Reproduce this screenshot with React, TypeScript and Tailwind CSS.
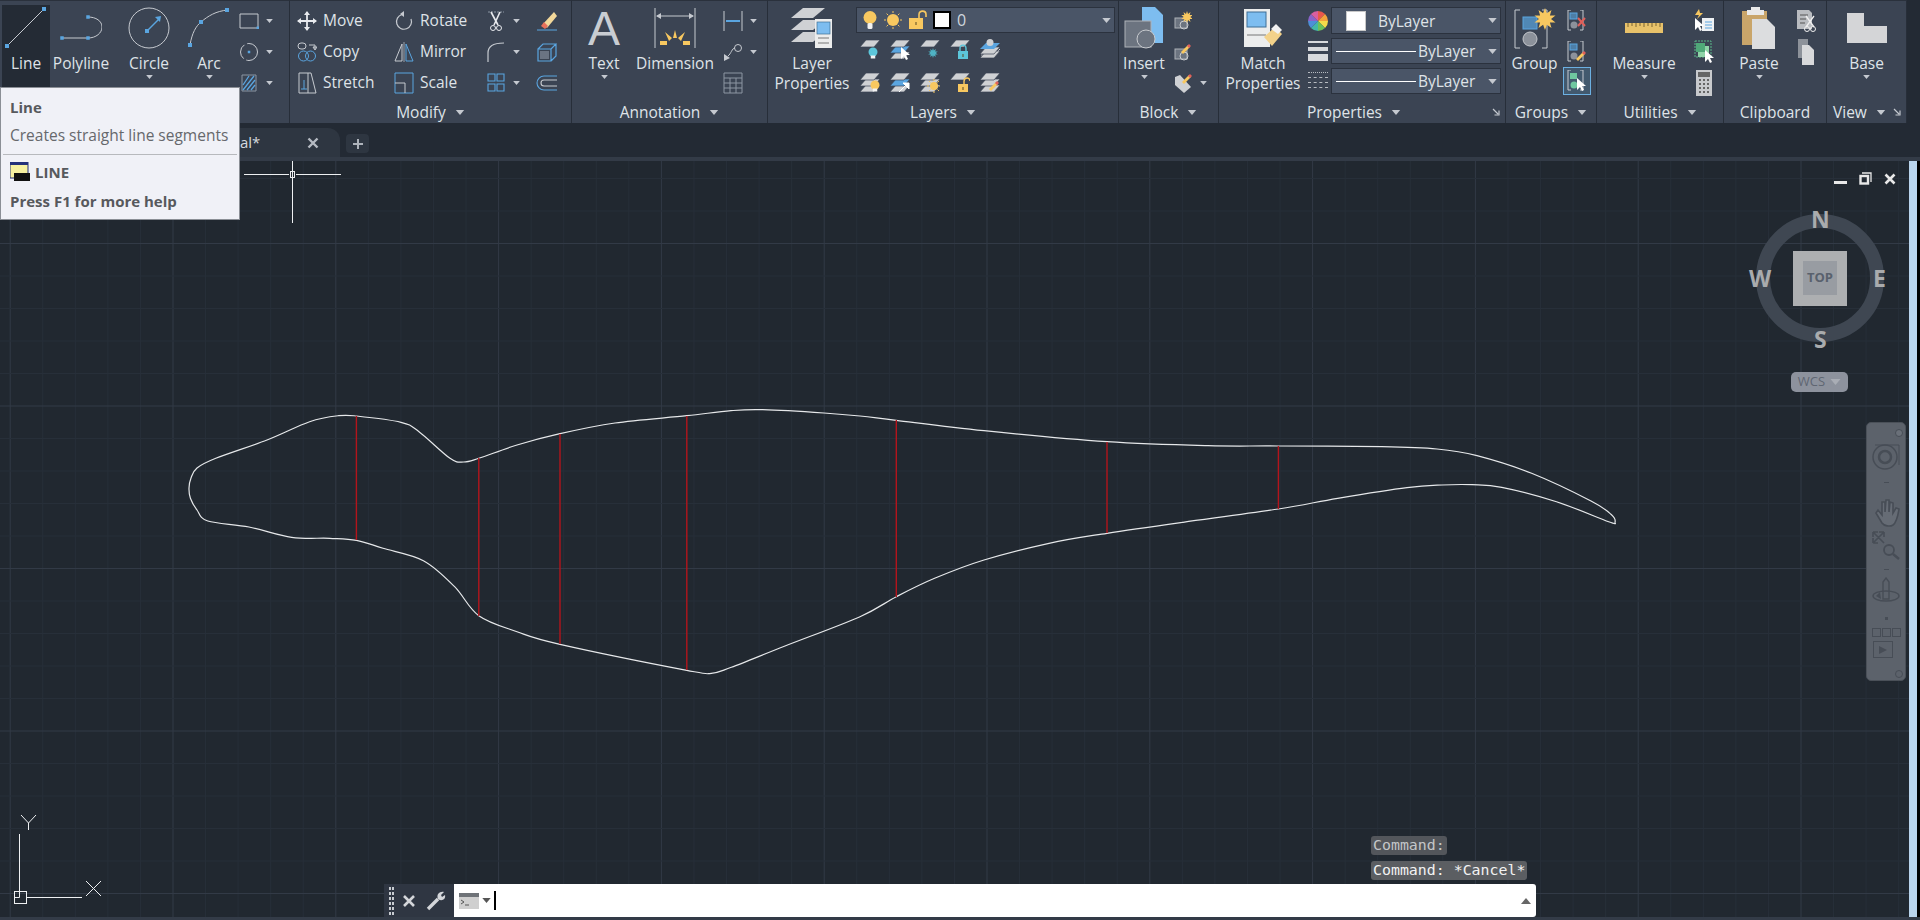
import { ReactNode } from "react";

const blue = "#5aa5e0";
const gray = "#c6cad0";
const sheet = "#cfd1d4";
const gold = "#f8c860";

function I({ w = 20, h = 20, children }: { w?: number; h?: number; children: ReactNode }) {
  return (
    <svg width={w} height={h} viewBox={`0 0 ${w} ${h}`} fill="none" className="relative block shrink-0">
      {children}
    </svg>
  );
}

function Caret({ w = 7, h = 4, c = "#c5c9d0" }: { w?: number; h?: number; c?: string }) {
  return (
    <svg width={w} height={h} viewBox="0 0 10 6" className="block shrink-0">
      <path d="M0 0H10L5 6Z" fill={c} />
    </svg>
  );
}

const Dot = ({ x, y, s = 4, c = blue }: { x: number; y: number; s?: number; c?: string }) => (
  <rect x={x - s / 2} y={y - s / 2} width={s} height={s} fill={c} />
);

// one layer sheet as a flat parallelogram
const Sheet = ({ x, y, c = sheet }: { x: number; y: number; c?: string }) => (
  <path d={`M${x + 6} ${y}H${x + 20}L${x + 14} ${y + 7}H${x}Z`} fill={c} stroke="#3b4453" strokeWidth="0.7" />
);

const Stack = ({ mid = sheet }: { mid?: string }) => (
  <>
    <Sheet x={0} y={13} />
    <Sheet x={0} y={7} c={mid} />
    <Sheet x={0} y={1} />
  </>
);

const Bulb = ({ x, y, c = gold, r = 4.5 }: { x: number; y: number; c?: string; r?: number }) => (
  <>
    <circle cx={x} cy={y} r={r} fill={c} />
    <rect x={x - r / 2} y={y + r - 1} width={r} height={3} fill="#f3f3f3" />
  </>
);

const Padlock = ({ x, y, c = gold, open = false }: { x: number; y: number; c?: string; open?: boolean }) => (
  <>
    <path d={open ? `M${x + 6} ${y + 4}V${y + 1.5}C${x + 6} ${y - 3} ${x + 12} ${y - 3} ${x + 12} ${y + 1}` : `M${x + 2} ${y + 4}V${y + 1.5}C${x + 2} ${y - 3} ${x + 8} ${y - 3} ${x + 8} ${y + 1.5}V${y + 4}`} stroke={c} strokeWidth="1.4" />
    <rect x={x} y={y + 4} width={10} height={8} fill={c} />
    <rect x={x + 4.5} y={y + 7} width={1} height={3} fill="#5d4a20" />
  </>
);

const Pencil = ({ x, y }: { x: number; y: number }) => (
  <>
    <path d={`M${x} ${y + 9}L${x + 7} ${y + 2}L${x + 9} ${y + 4}L${x + 2} ${y + 11}Z`} fill={gold} />
    <path d={`M${x + 6} ${y + 3}L${x + 8} ${y + 1}L${x + 10} ${y + 3}L${x + 8} ${y + 5}Z`} fill="#e0605a" />
  </>
);

const Star = ({ x, y, r = 8, c = gold }: { x: number; y: number; r?: number; c?: string }) => {
  const pts = Array.from({ length: 20 }, (_, i) => {
    const a = (i * Math.PI) / 10;
    const d = i % 2 ? r * 0.55 : r;
    return `${(x + d * Math.sin(a)).toFixed(1)},${(y - d * Math.cos(a)).toFixed(1)}`;
  });
  return <polygon points={pts.join(" ")} fill={c} />;
};

// sun: disc with short rays
const Sun = ({ x, y, r = 6, c = gold }: { x: number; y: number; r?: number; c?: string }) => (
  <>
    <circle cx={x} cy={y} r={r} fill={c} />
    {Array.from({ length: 8 }, (_, i) => {
      const a = (i * Math.PI) / 4;
      const p = (d: number) => `${(x + d * Math.sin(a)).toFixed(1)} ${(y - d * Math.cos(a)).toFixed(1)}`;
      return <path key={i} d={`M${p(r + 1)}L${p(r + 3)}`} stroke={c} />;
    })}
  </>
);

const Arrow = ({ x, y, c = "#fff" }: { x: number; y: number; c?: string }) => (
  <path d={`M${x} ${y}V${y + 12}L${x + 3} ${y + 9}L${x + 5} ${y + 13}L${x + 7} ${y + 12}L${x + 5} ${y + 8}H${x + 9}Z`} fill={c} />
);

const Brackets = ({ h = 20, w = 16 }: { h?: number; w?: number }) => (
  <path d={`M4 0H1V${h}H4M${w - 3} 0H${w}V${h}H${w - 3}`} stroke={gray} strokeWidth="1" />
);

function Device({ x, y }: { x: number; y: number }) {
  return (
    <>
      <rect x={x} y={y} width={17} height={29} fill="#eceded" />
      <rect x={x + 2} y={y + 3} width={13} height={12} fill="#7dbdf0" stroke="#3e6f96" strokeWidth="0.7" />
      <path d={`M${x + 3} ${y + 19}H${x + 14}M${x + 3} ${y + 24}H${x + 14}`} stroke="#777" />
    </>
  );
}

function BigTool({ w, label, icon, caret, active }: { w: number; label: ReactNode; icon: ReactNode; caret?: boolean; active?: boolean }) {
  return (
    <div style={{ width: w }} className="relative flex shrink-0 flex-col items-center">
      {active && <div className="absolute inset-x-0 top-[5px] h-[82px] bg-[#242b35]" />}
      <div className="relative flex h-[53px] items-center justify-center pt-[3px]">{icon}</div>
      <div className="relative text-center text-[15.5px] leading-[20px] text-[#dfe3e8]">{label}</div>
      {caret && <div className="mt-[2px]"><Caret /></div>}
    </div>
  );
}

function Rows({ children, className = "" }: { children: ReactNode; className?: string }) {
  return <div className={`flex shrink-0 flex-col pt-[5px] ${className}`}>{children}</div>;
}

function Row({ icon, caret, className = "" }: { icon: ReactNode; caret?: boolean; className?: string }) {
  return (
    <div className={`flex h-[31px] items-center ${className}`}>
      <div className="flex w-5 justify-center">{icon}</div>
      {caret && <div className="ml-[7px]"><Caret /></div>}
    </div>
  );
}

function TextRow({ icon, label }: { icon: ReactNode; label: string }) {
  return (
    <div className="flex h-[31px] items-center gap-[6px]">
      <div className="flex w-5 justify-center">{icon}</div>
      <span className="text-[15.5px] text-[#dfe3e8]">{label}</span>
    </div>
  );
}

function Launcher() {
  return (
    <svg width="8" height="8" viewBox="0 0 8 8" className="block">
      <path d="M1 1L6 6M7 2.5V7H2.5" stroke="#c5c9d0" strokeWidth="1.2" fill="none" />
    </svg>
  );
}

function Panel({ w, title, caret = true, launcher, children, titleClass = "justify-center" }: { w: number; title: string; caret?: boolean; launcher?: boolean; children: ReactNode; titleClass?: string }) {
  return (
    <div style={{ width: w }} className="flex shrink-0 flex-col border-r border-t border-r-[#272e39] border-t-[#2a313c] bg-[#3b4453]">
      <div className="-mt-px flex h-[99px]">{children}</div>
      <div className={`relative flex h-[24px] items-center gap-[9px] pt-[3px] text-[15.5px] text-[#dfe3e8] ${titleClass}`}>
        <span>{title}</span>
        {caret && <Caret w={10} h={5} />}
        {launcher && <div className="absolute right-[5px] top-[9px]"><Launcher /></div>}
      </div>
    </div>
  );
}

function Combo({ children, className = "h-[26px]" }: { children: ReactNode; className?: string }) {
  return (
    <div className={`flex items-center border border-[#2b323e] bg-[#4a5567] text-[15.5px] text-[#dfe3e8] ${className}`}>
      {children}
      <div className="ml-auto mr-[3px]"><Caret w={9} h={5} /></div>
    </div>
  );
}

function DrawPanel() {
  return (
    <Panel w={290} title="Draw">
      <div className="ml-[2px] flex">
        <BigTool w={48} active label="Line" icon={
          <I w={42} h={42}>
            <path d="M2 39L39 2" stroke={gray} />
            <Dot x={2} y={39} s={4} /><Dot x={39} y={2} s={4} />
          </I>
        } />
        <BigTool w={62} label="Polyline" icon={
          <I w={42} h={28}>
            <path d="M2 24H28C36 24 42 19 42 13C42 7 36 3 28 3" stroke={gray} />
            <Dot x={2} y={24} s={3.5} /><Dot x={28} y={24} s={3.5} /><Dot x={28} y={3} s={3.5} />
          </I>
        } />
        <BigTool w={74} label="Circle" caret icon={
          <I w={42} h={42}>
            <circle cx="21" cy="21" r="20" stroke={gray} />
            <path d="M19 24L31 12" stroke={blue} strokeWidth="1.5" />
            <Dot x={19} y={24} s={4} /><path d="M33 9L32 15L27 10Z" fill={blue} />
          </I>
        } />
        <BigTool w={46} label="Arc" caret icon={
          <I w={42} h={40}>
            <path d="M2 37C4 25 8 18 13 14C20 8 28 3 40 2" stroke={gray} />
            <Dot x={2} y={37} s={4} /><Dot x={13} y={14} s={4} /><Dot x={39} y={2} s={4} />
          </I>
        } />
      </div>
      <Rows className="ml-[7px]">
        <Row caret icon={<I w={20} h={16}><path d="M1 1H19V15H1Z" stroke={gray} /><Dot x={19} y={15} s={3} /></I>} />
        <Row caret icon={<I w={20} h={18}><circle cx="10" cy="9" r="8.5" stroke={gray} strokeDasharray="16 3 16 3" /><Dot x={10} y={9} s={2.5} /></I>} />
        <Row caret icon={
          <I w={20} h={20}>
            <path d="M3 2H17V18H3Z" stroke="#8b95a3" />
            <path d="M4 12L10 3M4 17L15 3M8 17L16 7M12 17L16 12" stroke={blue} strokeWidth="1.3" />
          </I>
        } />
      </Rows>
    </Panel>
  );
}

function ModifyPanel() {
  return (
    <Panel w={282} title="Modify">
      <div className="ml-[7px] grid grid-cols-[97px_92px_51px_40px] grid-rows-[31px_31px_31px] pt-[5px]">
        <TextRow label="Move" icon={
          <I>
            <path d="M10 1V19M1 10H19" stroke="#e8eaee" strokeWidth="1.8" />
            <path d="M10 0L13 4H7ZM10 20L13 16H7ZM0 10L4 7V13ZM20 10L16 7V13Z" fill="#e8eaee" />
          </I>
        } />
        <TextRow label="Rotate" icon={
          <I>
            <path d="M8 3.5A7.5 7.5 0 1 0 17 8" stroke={gray} strokeWidth="1.2" />
            <path d="M6 3L10 0V6Z" fill={gray} />
          </I>
        } />
        <Row caret icon={
          <I h={22}>
            <path d="M2 2H18" stroke="#8b95a3" strokeDasharray="2 1" />
            <path d="M5 2L12 15M14 2L8 15" stroke="#e8eaee" strokeWidth="1.6" />
            <circle cx="7" cy="18" r="2.5" stroke="#e8eaee" /><circle cx="13" cy="18" r="2.5" stroke="#e8eaee" />
          </I>
        } />
        <Row icon={
          <I w={22} h={22}>
            <path d="M7 14L18 2L21 6L11 18Z" fill="#f3d89a" /><path d="M5 16L8 12L12 16L9 19Z" fill="#e8705a" />
            <path d="M1 20H21" stroke={blue} />
          </I>
        } />
        <TextRow label="Copy" icon={
          <I>
            <rect x="1" y="1" width="8" height="6" rx="3" stroke={gray} /><path d="M12 3H18V7M18 8L16 5H20Z" stroke={gray} />
            <circle cx="6.5" cy="14" r="5" stroke={blue} /><circle cx="13.5" cy="14" r="5" stroke={blue} />
          </I>
        } />
        <TextRow label="Mirror" icon={
          <I h={20}>
            <path d="M8 2L1 19H8Z" stroke={gray} /><path d="M12 2L19 19H12Z" stroke={blue} /><path d="M10 0V20" stroke={gray} strokeWidth="0.7" />
          </I>
        } />
        <Row caret icon={<I><path d="M2 20V11C2 5 6 1 18 1" stroke={gray} strokeWidth="1.2" /></I>} />
        <Row icon={
          <I h={20}>
            <path d="M1 7H14V19H1ZM1 7L6 2H19L14 7M14 19L19 14V2" stroke={blue} strokeWidth="1.2" />
            <path d="M3 9H12V17H3Z" fill="#6b7483" />
          </I>
        } />
        <TextRow label="Stretch" icon={
          <I w={20} h={22}>
            <path d="M2 1H11V21H2ZM11 1H14L19 21H11" stroke={gray} strokeWidth="1" />
            <path d="M7 8V17M4 17H10" stroke={blue} />
          </I>
        } />
        <TextRow label="Scale" icon={
          <I h={22}>
            <path d="M1 1H19V21H1Z" stroke={blue} strokeWidth="1" /><path d="M1 11H11V21" stroke={gray} strokeWidth="1" />
          </I>
        } />
        <Row caret icon={
          <I w={18} h={20}>
            <path d="M1 1H8V8H1ZM10 1H17V8H10ZM1 11H8V18H1ZM10 11H17V18H10Z" stroke={blue} strokeWidth="1.1" />
          </I>
        } />
        <Row icon={
          <I w={22} h={16}>
            <path d="M21 1H8A7 7 0 0 0 8 15H21" stroke={blue} strokeWidth="1.1" />
            <path d="M21 5H8A3 3 0 0 0 8 11H21" stroke={gray} strokeWidth="1.1" />
          </I>
        } />
      </div>
    </Panel>
  );
}

function AnnotationPanel() {
  return (
    <Panel w={196} title="Annotation">
      <div className="flex pl-[2px]">
        <BigTool w={60} label="Text" caret icon={
          <span className="mt-[1px] block font-['Liberation_Sans',sans-serif] text-[48px] leading-[48px] text-[#c9cdd2]">A</span>
        } />
        <BigTool w={82} label="Dimension" icon={
          <I w={42} h={42}>
            <path d="M1 1V41M41 1V41" stroke={gray} />
            <path d="M3 9H39" stroke={gray} /><path d="M2 9L7 6V12ZM40 9L35 6V12Z" fill={gray} />
            <path d="M21 23L23 31H19ZM11 25L18 31L15 34ZM31 25L24 31L27 34Z" fill={gold} />
            <path d="M6 34H13V38H6ZM29 34H36V38H29Z" fill={gold} />
          </I>
        } />
        <Rows className="ml-[7px]">
          <Row caret icon={
            <I h={22}><path d="M1 1V21M19 1V21" stroke={gray} /><path d="M3 11H17" stroke={blue} strokeWidth="2" /></I>
          } />
          <Row caret icon={
            <I h={20}><circle cx="15" cy="6" r="3.5" stroke={gray} /><path d="M12 6C9 6 8 12 5 14" stroke={gray} /><path d="M1 19V12L7 16Z" fill={gray} /></I>
          } />
          <Row icon={
            <I w={20} h={22}><path d="M1 1H19V21H1ZM1 6H19M1 11H19M1 16H19M7 6V21M13 6V21" stroke="#8d96a3" /></I>
          } />
        </Rows>
      </div>
    </Panel>
  );
}

function LayersPanel() {
  return (
    <Panel w={351} title="Layers">
      <div className="flex w-[88px] shrink-0 flex-col items-center">
        <div className="flex h-[53px] items-center pt-[3px]">
          <I w={42} h={42}>
            <path d="M12 1H34L22 11H0Z" fill={sheet} /><path d="M12 13H34L22 23H0Z" fill={sheet} /><path d="M12 25H34L22 35H0Z" fill={sheet} />
            <Device x={24} y={12} />
          </I>
        </div>
        <div className="text-center text-[15.5px] leading-[20px] text-[#dfe3e8]">Layer<br />Properties</div>
      </div>
      <div className="flex flex-col pt-[7px]">
        <Combo className="h-[26px] w-[259px]">
          <div className="ml-[5px] flex items-center gap-[5px]">
            <I w={16} h={20}><circle cx="8" cy="7.5" r="6.5" fill={gold} /><rect x="5.5" y="13" width="5" height="6" rx="1.5" fill="#f2f2f2" /></I>
            <I w={20} h={20}><Sun x={10} y={10} /></I>
            <I w={20} h={20}>
              <rect x="1" y="8" width="14" height="11" fill={gold} />
              <path d="M11 8V4.5C11 0 18 0 18 4.5V7" stroke={gold} strokeWidth="1.6" />
              <rect x="7.5" y="12" width="1" height="3" fill="#5d4a20" />
            </I>
          </div>
          <div className="ml-[5px] h-[18px] w-[18px] border-2 border-black bg-white" />
          <span className="ml-[6px] text-[16px] text-[#cfd5dd]">0</span>
        </Combo>
        <div className="ml-[4px] mt-[6px] flex gap-[10px]">
          <I h={22}><Sheet x={0} y={1} /><Bulb x={13} y={13} c="#5cc6da" /></I>
          <I h={22}><Stack mid={blue} /><Arrow x={11} y={8} /></I>
          <I h={22}><Sheet x={0} y={1} /><Star x={13} y={14} r={5} c="#4fb3c4" /></I>
          <I h={22}><Sheet x={0} y={1} /><Padlock x={8} y={8} c="#5cc6da" /></I>
          <I h={22}><path d="M1 16H14L20 10" stroke={sheet} /><Sheet x={0} y={12} /><Sheet x={0} y={8} /><path d="M6 4H20L14 10H0Z" fill={blue} /><circle cx="10" cy="3.5" r="3.5" fill={sheet} /></I>
        </div>
        <div className="ml-[4px] mt-[11px] flex gap-[10px]">
          <I h={22}><Stack /><Bulb x={15} y={13} /></I>
          <I h={22}><Stack mid={blue} /><path d="M9 20L17 12M13 11H19V17Z" stroke="#fff" fill="#fff" /></I>
          <I h={22}><Stack /><Sun x={14} y={14} r={4} /></I>
          <I h={22}><Sheet x={0} y={1} /><Padlock x={8} y={8} open /></I>
          <I h={22}><Stack /><Pencil x={9} y={8} /></I>
        </div>
      </div>
    </Panel>
  );
}

function BlockPanel() {
  return (
    <Panel w={100} title="Block">
      <BigTool w={50} label="Insert" caret icon={
        <I w={40} h={42}>
          <path d="M18 0H31L39 8V36H18Z" fill="#7dbdf0" />
          <rect x="1" y="14" width="26" height="26" fill="#6c7480" stroke="#aeb2b8" />
          <circle cx="22" cy="32" r="9" fill="#6c7480" stroke="#c9ccd0" />
        </I>
      } />
      <Rows className="ml-[4px]">
        <Row icon={<I w={18} h={20}><rect x="1" y="7" width="12" height="10" fill="#6c7480" stroke="#aeb2b8" /><circle cx="10" cy="14" r="4" stroke="#c9ccd0" /><Star x={13} y={6} r={6} /></I>} />
        <Row icon={<I w={18} h={20}><rect x="1" y="7" width="12" height="10" fill="#6c7480" stroke="#aeb2b8" /><circle cx="10" cy="14" r="4" stroke="#c9ccd0" /><Pencil x={7} y={1} /></I>} />
        <Row caret icon={<I w={18} h={22}><path d="M1 5L6 3L17 15L10 21L1 13Z" fill={sheet} /><Pencil x={8} y={1} /></I>} />
      </Rows>
    </Panel>
  );
}

function PropertiesPanel() {
  const slices = ["#e9574c", "#f3a33c", "#f5dc4a", "#6cc15a", "#43b7a8", "#4c8fd8", "#8a63c9", "#d95fa0"];
  return (
    <Panel w={287} title="Properties" launcher titleClass="justify-center pr-[16px]">
      <BigTool w={88} label={<>Match<br />Properties</>} icon={
        <I w={40} h={42}>
          <rect x="1" y="2" width="26" height="38" fill="#eceded" />
          <rect x="4" y="5" width="19" height="15" fill="#7dbdf0" stroke="#3e6f96" />
          <path d="M4 28H23" stroke="#777" />
          <path d="M21 30L32 20L39 27L29 39Z" fill="#f3d28a" />
          <path d="M28 22L33 17L39 23L35 27Z" fill="#f2f2f2" />
        </I>
      } />
      <div className="ml-[1px] flex w-5 flex-col items-center pt-[11px]">
        <svg width="20" height="20" viewBox="-10 -10 20 20" className="block">
          {slices.map((c, i) => {
            const a = (i * Math.PI) / 4;
            const b = ((i + 1) * Math.PI) / 4;
            return <path key={c} d={`M0 0L${10 * Math.sin(a)} ${-10 * Math.cos(a)}A10 10 0 0 1 ${10 * Math.sin(b)} ${-10 * Math.cos(b)}Z`} fill={c} />;
          })}
        </svg>
        <div className="mt-[10px] flex h-[20px] w-5 flex-col justify-between">
          <div className="h-[2px] bg-[#d8dadd]" /><div className="h-[4px] bg-[#d8dadd]" /><div className="h-[7px] bg-[#d8dadd]" />
        </div>
        <div className="mt-[11px] flex h-[16px] w-5 flex-col justify-between">
          <div className="border-t border-dotted border-[#b8bcc2]" /><div className="border-t border-dashed border-[#b8bcc2]" /><div className="border-t border-dashed border-[#b8bcc2]" /><div className="border-t border-dashed border-[#b8bcc2]" />
        </div>
      </div>
      <div className="ml-[3px] flex w-[170px] flex-col gap-[4px] pt-[7px]">
        <Combo className="h-[27px]">
          <div className="ml-[14px] h-[20px] w-[20px] border border-[#c8c8c8] bg-white" />
          <span className="ml-[12px] pt-[2px]">ByLayer</span>
        </Combo>
        <Combo>
          <div className="ml-[4px] h-px w-[80px] bg-white" />
          <span className="ml-[2px] pt-[2px]">ByLayer</span>
        </Combo>
        <Combo>
          <div className="ml-[4px] h-px w-[80px] bg-white" />
          <span className="ml-[2px] pt-[2px]">ByLayer</span>
        </Combo>
      </div>
    </Panel>
  );
}

function GroupsPanel() {
  return (
    <Panel w={91} title="Groups">
      <BigTool w={57} label="Group" icon={
        <I w={42} h={42}>
          <path d="M6 3H1V41H6M28 3H33V41H28" stroke={gray} />
          <rect x="9" y="10" width="14" height="12" fill={blue} fillOpacity="0.7" stroke={blue} />
          <circle cx="16" cy="32" r="7" fill="#8c929b" stroke="#c4c7cc" />
          <Star x={31} y={12} r={11} />
        </I>
      } />
      <Rows className="w-[28px] items-center">
        <div className="flex h-[31px] items-center">
          <I h={22}><Brackets h={20} /><rect x="3" y="3" width="7" height="6" fill={blue} fillOpacity="0.6" stroke={blue} /><circle cx="7" cy="15" r="3.5" fill="#8c929b" /><path d="M11 8L18 16M18 8L11 16" stroke="#e0605a" strokeWidth="2" /></I>
        </div>
        <div className="flex h-[31px] items-center">
          <I h={22}><Brackets h={20} /><rect x="3" y="3" width="7" height="6" fill={blue} fillOpacity="0.6" stroke={blue} /><circle cx="7" cy="15" r="3.5" fill="#8c929b" /><Pencil x={9} y={9} /></I>
        </div>
        <div className="flex h-[28px] w-[28px] items-center justify-center border border-[#6cb0e2] bg-[#42596e]">
          <I h={22}><Brackets h={20} /><rect x="3" y="3" width="7" height="6" fill="#6fc7a0" /><circle cx="7" cy="15" r="3.5" fill="#6fc7a0" /><Arrow x={10} y={8} /></I>
        </div>
      </Rows>
    </Panel>
  );
}

function UtilitiesPanel() {
  return (
    <Panel w={127} title="Utilities">
      <BigTool w={94} label="Measure" caret icon={
        <I w={38} h={12}>
          <rect x="0" y="1" width="38" height="10" fill="#e8c26a" />
          <path d="M3 1V5M7 1V4M11 1V5M15 1V4M19 1V5M23 1V4M27 1V5M31 1V4M35 1V5" stroke="#7a6430" />
        </I>
      } />
      <Rows className="ml-[3px]">
        <Row icon={<I h={24}><path d="M5 0L1 6H5L3 10L9 4H6Z" fill={gold} /><rect x="8" y="9" width="12" height="13" fill="#eef1f4" /><path d="M11 13H18M11 16H18M11 19H18" stroke={blue} /><Arrow x={1} y={9} /></I>} />
        <Row icon={<I h={24}><rect x="1" y="1" width="16" height="16" stroke="#5ab88a" strokeDasharray="2 1" /><rect x="4" y="6" width="11" height="11" fill="#8fd3a8" /><rect x="2" y="3" width="9" height="9" fill="#4fa878" /><Arrow x={11} y={10} /></I>} />
        <Row icon={<I w={16} h={26}><rect x="0" y="0" width="16" height="26" fill="#c8cacd" /><rect x="2" y="2" width="12" height="5" fill="#666" /><path d="M3 10H13M3 14H13M3 18H13M3 22H13" stroke="#666" strokeWidth="2" strokeDasharray="2 2" /></I>} />
      </Rows>
    </Panel>
  );
}

function ClipboardPanel() {
  return (
    <Panel w={103} title="Clipboard" caret={false}>
      <BigTool w={70} label="Paste" caret icon={
        <I w={34} h={42}>
          <rect x="0" y="4" width="25" height="34" fill="#c9a56a" />
          <rect x="9" y="0" width="9" height="5" fill="#e9e9e9" /><rect x="5" y="3" width="17" height="5" fill="#e9e9e9" />
          <path d="M10 12H25L33 20V42H10Z" fill="#dcdddf" />
        </I>
      } />
      <Rows className="ml-[2px]">
        <Row icon={<I h={22}><path d="M1 0H13L16 3V19H1Z" fill="#b9bcc0" /><path d="M4 5H12M4 9H10M4 13H9" stroke="#555" /><path d="M10 6L18 17M18 6L10 17" stroke="#f0f0f0" strokeWidth="1.3" /><circle cx="11" cy="19" r="2.5" stroke="#f0f0f0" /><circle cx="17" cy="19" r="2.5" stroke="#f0f0f0" /></I>} />
        <Row icon={<I w={16} h={26}><path d="M0 0H10V19H0Z" fill="#8d929a" /><path d="M4 6H11L16 11V26H4Z" fill="#d8d9db" /></I>} />
      </Rows>
    </Panel>
  );
}

function ViewPanel() {
  return (
    <Panel w={80} title="View" launcher titleClass="pl-[6px]">
      <BigTool w={79} label="Base" caret icon={
        <I w={40} h={30}>
          <path d="M0 0H17V13H40V30H0Z" fill="#d4d5d7" />
        </I>
      } />
    </Panel>
  );
}

// outline of the blade section, page coordinates
const outline: [number, number][] = [
  [189, 488], [191, 478], [197, 468], [215.8, 458.3], [267, 440], [309.6, 421.7], [338.6, 415.7], [356.4, 416], [401, 422.3], [419, 431.7], [450, 458.3], [463.6, 462], [478.8, 458.3], [517, 445], [560, 433.7], [615, 423], [686.8, 415.7], [731, 410.7], [762.7, 409.7], [824, 413], [860, 416], [896.3, 420.3], [984, 430.7], [1107, 441.7], [1208, 445.7], [1278.4, 446], [1382, 446.7], [1437, 449], [1477, 455.7], [1531.6, 473.3], [1591, 501], [1611, 514.3], [1615, 522.3], [1608.7, 521.7], [1556.5, 501.7], [1501.8, 487.3], [1472, 484.7], [1442, 485], [1407, 487.7], [1337.6, 498.3], [1278.4, 509], [1183, 522.3], [1107, 533.3], [1049, 543.3], [984, 560], [934.6, 578.3], [896.3, 596.7], [860, 616.7], [785, 646], [731.4, 667.3], [711.3, 673.3], [686.8, 670.3], [560, 644.3], [517, 631.7], [478.8, 615.7], [454.6, 586.7], [423.4, 560.7], [383, 548.3], [356.4, 540.3], [329.6, 538.3], [291.7, 537.3], [249, 527], [207.8, 521], [197, 510], [190.4, 498.3],
];

function smoothPath(pts: [number, number][]) {
  const n = pts.length;
  let d = `M${pts[0][0]} ${pts[0][1]}`;
  for (let i = 0; i < n; i++) {
    const p0 = pts[(i - 1 + n) % n];
    const p1 = pts[i];
    const p2 = pts[(i + 1) % n];
    const p3 = pts[(i + 2) % n];
    const c1x = p1[0] + (p2[0] - p0[0]) / 6;
    const c1y = p1[1] + (p2[1] - p0[1]) / 6;
    const c2x = p2[0] - (p3[0] - p1[0]) / 6;
    const c2y = p2[1] - (p3[1] - p1[1]) / 6;
    d += `C${c1x.toFixed(1)} ${c1y.toFixed(1)} ${c2x.toFixed(1)} ${c2y.toFixed(1)} ${p2[0]} ${p2[1]}`;
  }
  return d + "Z";
}

const sections = [
  [356.4, 416, 540], [478.8, 458, 616], [560, 434, 644], [686.8, 416, 670], [896.3, 420, 597], [1107, 442, 533], [1278.4, 446, 509],
];

const gridX = Array.from({ length: 59 }, (_, i) => 10.2 + i * 32.56);
const gridY = Array.from({ length: 24 }, (_, i) => 178.5 + i * 32.5);

function Drawing() {
  return (
    <svg className="absolute inset-0 block h-full w-full" viewBox="0 161 1909 756" preserveAspectRatio="none" fill="none">
      {gridX.map((x, i) => (
        <path key={x} d={`M${x} 161V917`} stroke={i % 5 === 0 ? "#323a46" : "#272f39"} />
      ))}
      {gridY.map((y, i) => (
        <path key={y} d={`M0 ${y}H1909`} stroke={i % 5 === 2 ? "#323a46" : "#272f39"} />
      ))}
      <path d={smoothPath(outline)} stroke="#e6e8ea" strokeWidth="1.2" />
      {sections.map(([x, a, b]) => (
        <path key={x} d={`M${x} ${a}V${b}`} stroke="#b3141c" strokeWidth="1.4" />
      ))}
      {/* crosshair */}
      <path d="M292.5 161V223M244 174.5H289M296 174.5H341" stroke="#eef0f2" />
      <rect x="290.5" y="171.5" width="4" height="6" stroke="#eef0f2" />
      {/* ucs */}
      <path d="M19.5 834V891M26 897.5H82" stroke="#eef0f2" />
      <rect x="14.5" y="891.5" width="12" height="12" stroke="#eef0f2" />
      <path d="M19.5 891V897.5H14.5" stroke="#eef0f2" />
      <path d="M21 815L28.5 823L36 815M28.5 823V830M86 881L101 896M101 881L86 896" stroke="#eef0f2" />
    </svg>
  );
}

function ViewCube() {
  return (
    <div className="absolute left-[1756px] top-[53px] h-[170px] w-[128px]">
      <div className="absolute left-0 top-[0px] flex h-[128px] w-[128px] items-center justify-center rounded-full border-[14px] border-[#3f4752]">
        <div className="flex h-[55px] w-[54px] items-center justify-center bg-[#adafb1]">
          <div className="flex h-[34px] w-[34px] items-center justify-center bg-[#989ca2] text-[13px] font-bold text-[#59616d]">TOP</div>
        </div>
      </div>
      <span className="absolute left-[55px] top-[-9px] text-[23px] font-bold leading-[28px] text-[#a9abad]">N</span>
      <span className="absolute left-[58px] top-[111px] text-[23px] font-bold leading-[28px] text-[#a9abad]">S</span>
      <span className="absolute left-[-7px] top-[50px] text-[23px] font-bold leading-[28px] text-[#a9abad]">W</span>
      <span className="absolute left-[117px] top-[50px] text-[23px] font-bold leading-[28px] text-[#a9abad]">E</span>
      <div className="absolute left-[35px] top-[158px] flex h-5 w-[57px] items-center justify-center gap-[5px] rounded-[5px] bg-[#8d929d] text-[13px] text-[#5f6672]">
        WCS <Caret w={11} h={6} c="#a9adb5" />
      </div>
    </div>
  );
}

function NavBar() {
  const ic = "#474d56";
  return (
    <div className="absolute left-[1866px] top-[261px] flex h-[259px] w-10 flex-col items-center rounded-[5px] border border-[#4a5058] bg-[#5c626b] pt-[6px]">
      <div className="ml-auto mr-[2px] h-2 w-2 rounded-full border border-[#474d56] bg-[#6a7079]" />
      <div className="mt-[6px]">
        <I w={28} h={28}>
          <circle cx="13" cy="14" r="12" stroke={ic} strokeWidth="1.5" /><circle cx="13" cy="14" r="6" stroke={ic} strokeWidth="2.5" />
          <path d="M3 2H27V22" stroke={ic} />
        </I>
      </div>
      <div className="mt-[11px] h-px w-[5px] bg-[#474d56]" />
      <div className="mt-[15px]">
        <I w={28} h={30}>
          <path d="M4 15L10 25C12 28 18 29 21 27C25 24 26 17 27 11L24 10L21 15V5L18 4L17 14V2L14 2L13 14V4L10 4L10 17L6 12Z" stroke={ic} strokeWidth="1.6" fill="#666c75" />
        </I>
      </div>
      <div className="mt-[2px]">
        <I w={30} h={30}>
          <path d="M2 2L13 13M13 2L2 13M2 2H7M2 2V7M13 2H8M13 2V7M2 13V8M2 13H7" stroke={ic} strokeWidth="1.6" />
          <circle cx="18" cy="20" r="5" stroke={ic} strokeWidth="1.8" /><path d="M22 24L28 29" stroke={ic} strokeWidth="2.4" />
        </I>
      </div>
      <div className="mt-[9px] h-px w-[5px] bg-[#474d56]" />
      <div className="mt-[7px]">
        <I w={30} h={30}>
          <path d="M15 1L18 5V22H12V5Z" stroke={ic} strokeWidth="1.4" />
          <ellipse cx="15" cy="19" rx="13" ry="5" stroke={ic} strokeWidth="1.4" />
          <path d="M9 15L5 19L10 22" fill={ic} />
        </I>
      </div>
      <div className="mt-[10px] h-[3px] w-[3px] bg-[#474d56]" />
      <div className="mt-[8px] flex gap-[1px]">
        <div className="h-[9px] w-[9px] border border-[#474d56]" /><div className="h-[9px] w-[9px] border border-[#474d56]" /><div className="h-[9px] w-[9px] border border-[#474d56]" />
      </div>
      <div className="mr-[6px] mt-[4px] flex h-[17px] w-[20px] items-center justify-center border border-[#474d56]">
        <svg width="8" height="8" viewBox="0 0 8 8" className="block"><path d="M0 0L8 4L0 8Z" fill={ic} /></svg>
      </div>
      <div className="mb-[2px] ml-auto mr-[2px] mt-auto h-2 w-2 rounded-full border border-[#474d56]" />
    </div>
  );
}

function CommandLine() {
  return (
    <div className="absolute left-[384px] top-[723px] flex h-[33px] w-[1152px]">
      <div className="flex w-[70px] shrink-0 items-center bg-[#2f3642]">
        <div className="ml-[5px] grid grid-cols-2 gap-x-[1px] gap-y-[2px]">
          {Array.from({ length: 12 }, (_, i) => <div key={i} className="h-[3px] w-[2px] bg-[#c7cbd0]" />)}
        </div>
        <div className="ml-[9px]">
          <I w={12} h={12}><path d="M1 1L11 11M11 1L1 11" stroke="#d4d6da" strokeWidth="2.6" /></I>
        </div>
        <div className="ml-[11px]">
          <I w={20} h={20}><path d="M2 18L12 8" stroke="#d4d6da" strokeWidth="3.4" /><path d="M12 8C10 3 14 0 18 1L15 4L16 6L19 4C20 8 16 11 12 8Z" fill="#d4d6da" /></I>
        </div>
      </div>
      <div className="flex flex-1 items-center rounded-r-[3px] bg-white pl-[5px]">
        <I w={20} h={16}>
          <rect x="0" y="0" width="20" height="16" fill="#cfcfcf" />
          <rect x="0" y="0" width="20" height="4" fill="#6f7378" />
          <path d="M2 7L5 9L2 11M6 12H10" stroke="#555" />
        </I>
        <div className="ml-[3px]"><Caret w={9} h={5} c="#555" /></div>
        <div className="ml-[3px] h-[19px] w-[2px] bg-black" />
        <svg width="10" height="6" viewBox="0 0 10 6" className="ml-auto mr-[5px] block"><path d="M0 6H10L5 0Z" fill="#666" /></svg>
      </div>
    </div>
  );
}

function CommandHistory() {
  return (
    <div className="absolute left-[1371px] top-[675px] flex flex-col items-start gap-[6px] font-['DejaVu_Sans_Mono',monospace] text-[14.9px] leading-[19px]">
      <div className="rounded-[3px] bg-[#53565b] px-[2px] text-[#c4c6c8]">Command:</div>
      <div className="rounded-[3px] bg-[#5b5e62] px-[2px] text-[#f2f2f2]">Command: *Cancel*</div>
    </div>
  );
}

function WindowButtons() {
  return (
    <div className="absolute left-[1834px] top-[11px] flex items-center gap-[12px]">
      <div className="mt-[8px] h-[3px] w-[13px] bg-[#e8e8e8]" />
      <I w={13} h={13}>
        <path d="M3 1H12V10" stroke="#e8e8e8" strokeWidth="1.3" /><rect x="1.5" y="4" width="7.5" height="7.5" stroke="#e8e8e8" strokeWidth="2.4" />
      </I>
      <I w={12} h={12}><path d="M1.5 1.5L10.5 10.5M10.5 1.5L1.5 10.5" stroke="#e8e8e8" strokeWidth="2.6" /></I>
    </div>
  );
}

function Tooltip() {
  return (
    <div className="absolute left-0 top-[87px] z-10 h-[133px] w-[240px] border border-[#8b8f96] bg-[#f0f1f7] text-[#57595d]">
      <div className="px-[9px] pt-[9px] text-[15px] font-bold leading-[20px]">Line</div>
      <div className="mt-[8px] px-[9px] text-[15.5px] leading-[20px] text-[#66686c]">Creates straight line segments</div>
      <div className="mx-[2px] mt-[9px] border-t border-[#b7b9bd]" />
      <div className="mt-[7px] flex items-center gap-[5px] px-[9px] text-[15px] font-bold leading-[20px]">
        <I w={20} h={20}>
          <rect x="0" y="0" width="18" height="16" fill="#f6f0a0" stroke="#23307a" />
          <rect x="0" y="0" width="18" height="3" fill="#23307a" />
          <rect x="4" y="11" width="16" height="8" fill="#111" />
        </I>
        LINE
      </div>
      <div className="mt-[9px] px-[9px] text-[15px] font-bold leading-[20px]">Press F1 for more help</div>
    </div>
  );
}

export default function App() {
  return (
    <div className="relative flex h-[920px] w-[1920px] flex-col overflow-hidden bg-[#232a34] font-['Open_Sans',sans-serif]">
      <div className="flex h-[123px] shrink-0">
        <DrawPanel />
        <ModifyPanel />
        <AnnotationPanel />
        <LayersPanel />
        <BlockPanel />
        <PropertiesPanel />
        <GroupsPanel />
        <UtilitiesPanel />
        <ClipboardPanel />
        <ViewPanel />
      </div>
      <div className="flex h-[34px] items-end">
        <div className="ml-[200px] flex h-[29px] w-[140px] items-center rounded-tr-[12px] bg-[#2e3641] pl-[40px] text-[15px] text-[#d5d9df]">
          <span>al*</span>
          <div className="ml-[47px]">
            <I w={12} h={12}><path d="M1.5 1.5L10.5 10.5M10.5 1.5L1.5 10.5" stroke="#b5bac2" strokeWidth="2.4" /></I>
          </div>
        </div>
        <div className="mb-[4px] ml-[6px] flex h-[19px] w-[23px] items-center justify-center rounded-[4px] bg-[#2e3641]">
          <I w={10} h={10}><path d="M5 0V10M0 5H10" stroke="#aeb3bb" strokeWidth="2" /></I>
        </div>
      </div>
      <div className="h-[4px] bg-[#333b47]" />
      <div className="flex h-[756px]">
        <div className="relative w-[1909px] shrink-0 overflow-hidden bg-[#212830]">
          <Drawing />
          <WindowButtons />
          <ViewCube />
          <NavBar />
          <CommandHistory />
          <CommandLine />
        </div>
        <div className="w-[8px] bg-[#b9d4ec]" />
        <div className="w-[3px] bg-black" />
      </div>
      <div className="h-[3px] bg-[#333b47]" />
      <Tooltip />
    </div>
  );
}
